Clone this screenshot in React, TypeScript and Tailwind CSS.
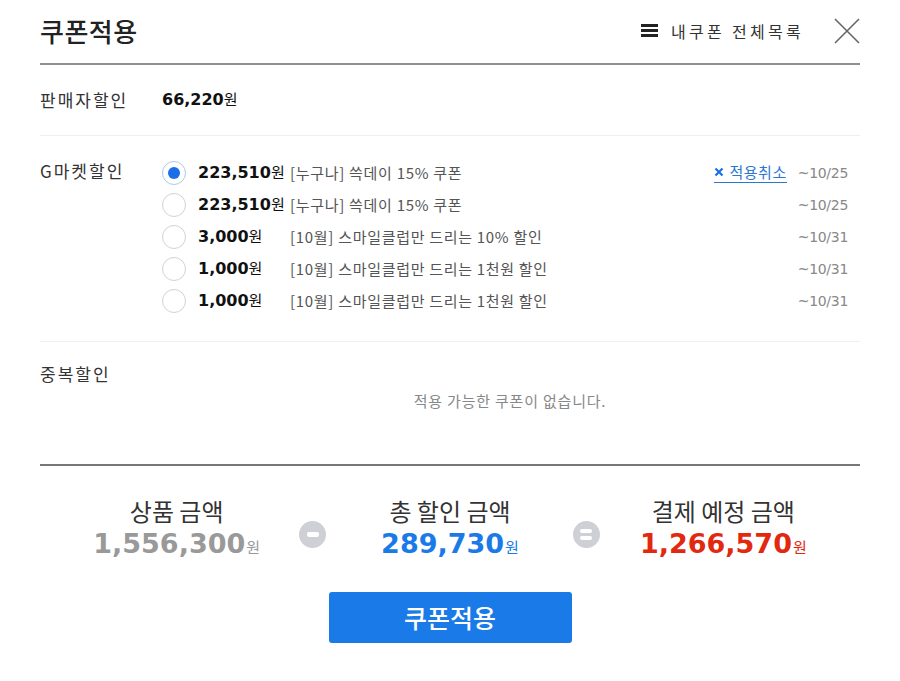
import React from "react";

const KR = "font-['Noto_Sans_CJK_KR','Noto_Sans',sans-serif]";
const NUM = "font-['DejaVu_Sans','Noto_Sans_CJK_KR',sans-serif]";

type Coupon = { amount: string; desc: string; date: string; selected?: boolean };

const coupons: Coupon[] = [
  { amount: "223,510", desc: "[누구나] 쓱데이 15% 쿠폰", date: "~10/25", selected: true },
  { amount: "223,510", desc: "[누구나] 쓱데이 15% 쿠폰", date: "~10/25" },
  { amount: "3,000", desc: "[10월] 스마일클럽만 드리는 10% 할인", date: "~10/31" },
  { amount: "1,000", desc: "[10월] 스마일클럽만 드리는 1천원 할인", date: "~10/31" },
  { amount: "1,000", desc: "[10월] 스마일클럽만 드리는 1천원 할인", date: "~10/31" },
];

function Radio({ checked }: { checked?: boolean }) {
  return checked ? (
    <span className="flex h-[24px] w-[24px] shrink-0 items-center justify-center rounded-full border border-[#a9c8ee] bg-white">
      <span className="h-[12px] w-[12px] rounded-full bg-[#1a6fe8]" />
    </span>
  ) : (
    <span className="h-[24px] w-[24px] shrink-0 rounded-full border border-[#d2d2d2] bg-white" />
  );
}

function Op({ kind }: { kind: "minus" | "equal" }) {
  return (
    <span className="absolute left-[-14px] top-[25px] flex h-[27px] w-[27px] flex-col items-center justify-center gap-[3px] rounded-full bg-[#cfd0d5]">
      {kind === "minus" ? (
        <span className="h-[5px] w-[12px] rounded-[2px] bg-white" />
      ) : (
        <>
          <span className="h-[4px] w-[12px] rounded-[2px] bg-white" />
          <span className="h-[4px] w-[12px] rounded-[2px] bg-white" />
        </>
      )}
    </span>
  );
}

export default function App() {
  return (
    <div className={`h-[681px] w-[900px] bg-white px-[40px] text-[#333] ${KR}`}>
      {/* Header */}
      <div className="flex h-[65px] items-center justify-between border-b-2 border-[#8f8f8f] pb-[2px]">
        <h1 className="text-[26px] font-medium leading-none tracking-[0.5px] text-[#222]">쿠폰적용</h1>
        <div className="flex items-center">
          <div className="flex items-center gap-[13px]">
            <svg width="17" height="13" viewBox="0 0 17 13">
              <rect x="0" y="0" width="17" height="3" fill="#222" />
              <rect x="0" y="5" width="17" height="3" fill="#222" />
              <rect x="0" y="10" width="17" height="3" fill="#222" />
            </svg>
            <span className="text-[16px] tracking-[3.3px] text-[#333]">내쿠폰 전체목록</span>
          </div>
          <svg className="ml-[30px]" width="26" height="26" viewBox="0 0 26 26">
            <path d="M1 1 L25 25 M25 1 L1 25" stroke="#666" strokeWidth="1.6" fill="none" />
          </svg>
        </div>
      </div>

      {/* Seller discount */}
      <div className="flex h-[71px] items-center border-b border-[#efefef]">
        <div className="w-[122px] text-[17px] tracking-[2px] text-[#333]">판매자할인</div>
        <div className="flex items-baseline text-[#111]">
          <span className={`${NUM} text-[16px] font-bold`}>66,220</span>
          <span className="text-[15px]">원</span>
        </div>
      </div>

      {/* G market discount */}
      <div className="flex border-b border-[#efefef] pb-[24px] pt-[21px]">
        <div className="w-[122px] pt-[1px] text-[17px] tracking-[2px] text-[#333]">G마켓할인</div>
        <div className="flex flex-1 flex-col pr-[12px]">
          {coupons.map((c, i) => (
            <div key={i} className="flex h-[32px] items-center">
              <Radio checked={c.selected} />
              <div className="ml-[12px] flex w-[92px] shrink-0 items-baseline text-[#111]">
                <span className={`${NUM} text-[16px] font-bold`}>{c.amount}</span>
                <span className="text-[15px]">원</span>
              </div>
              <span className="text-[15px] tracking-[0.7px] text-[#555]">{c.desc}</span>
              <div className="ml-auto flex items-center">
                {c.selected && (
                  <span className="mr-[11px] flex items-center gap-[6px] border-b border-[#2a76d2] pb-[1px] text-[15px] leading-[18px] tracking-[0.5px] text-[#2a76d2]">
                    <svg width="10" height="10" viewBox="0 0 10 10">
                      <path d="M1.5 1.5 L8.5 8.5 M8.5 1.5 L1.5 8.5" stroke="#1a6fe8" strokeWidth="2.2" />
                    </svg>
                    적용취소
                  </span>
                )}
                <span className={`${NUM} text-[14px] tracking-[-0.3px] text-[#888]`}>{c.date}</span>
              </div>
            </div>
          ))}
        </div>
      </div>

      {/* Duplicate discount */}
      <div className="h-[124px] border-b-2 border-[#777] pt-[19px]">
        <div className="text-[17px] tracking-[2px] text-[#333]">중복할인</div>
        <div className="mt-[3px] pl-[120px] text-center text-[15px] tracking-[0.8px] text-[#888]">적용 가능한 쿠폰이 없습니다.</div>
      </div>

      {/* Summary */}
      <div className="grid grid-cols-3 pt-[30px]">
        <div className="relative flex flex-col items-center">
          <div className="text-[24px] leading-[30px] text-[#333]">상품 금액</div>
          <div className="mt-[1px] flex items-baseline text-[#999]">
            <span className={`${NUM} text-[27px] font-bold leading-[34px]`}>1,556,300</span>
            <span className="ml-[1px] text-[15px]">원</span>
          </div>
        </div>
        <div className="relative flex flex-col items-center">
          <Op kind="minus" />
          <div className="text-[24px] leading-[30px] text-[#333]">총 할인 금액</div>
          <div className="mt-[1px] flex items-baseline text-[#1a7ae8]">
            <span className={`${NUM} text-[27px] font-bold leading-[34px]`}>289,730</span>
            <span className="ml-[1px] text-[15px]">원</span>
          </div>
        </div>
        <div className="relative flex flex-col items-center">
          <Op kind="equal" />
          <div className="text-[24px] leading-[30px] text-[#333]">결제 예정 금액</div>
          <div className="mt-[1px] flex items-baseline text-[#e2280f]">
            <span className={`${NUM} text-[27px] font-bold leading-[34px]`}>1,266,570</span>
            <span className="ml-[1px] text-[15px]">원</span>
          </div>
        </div>
      </div>

      {/* Button */}
      <div className="flex justify-center pt-[31px]">
        <button className="h-[51px] w-[243px] rounded-[3px] bg-[#1a7ae8] text-[25px] font-medium text-white">
          쿠폰적용
        </button>
      </div>
    </div>
  );
}
